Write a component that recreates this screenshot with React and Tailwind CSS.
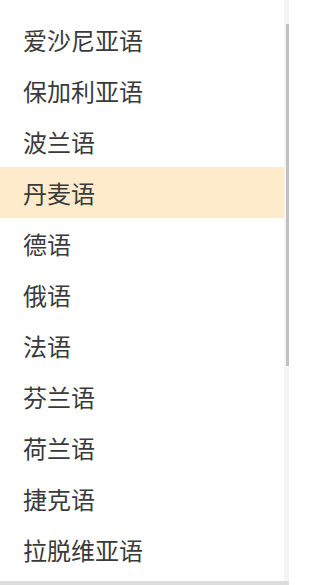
import React from "react";

const languages = [
  "爱沙尼亚语",
  "保加利亚语",
  "波兰语",
  "丹麦语",
  "德语",
  "俄语",
  "法语",
  "芬兰语",
  "荷兰语",
  "捷克语",
  "拉脱维亚语",
];

function App() {
  const active = "丹麦语";

  return (
    <div
      className="w-[289px] h-[585px] bg-[#dcdcdc] overflow-hidden"
      style={{ fontFamily: '"Noto Sans CJK SC", "Noto Sans", sans-serif' }}
    >
      <div className="flex h-[581px] bg-white">
        <div className="w-[284px] pt-[14px]">
          {languages.map((lang) => (
            <div
              key={lang}
              className={
                "h-[51px] flex items-center pl-[23px] text-[24px] text-[#3a3a3a] " +
                (lang === active ? "bg-[#fdebcb]" : "")
              }
            >
              {lang}
            </div>
          ))}
        </div>
        <div className="w-[5px] bg-[#f5f5f5] pt-[24px] flex justify-end">
          <div className="w-[3px] h-[342px] bg-[#c1c1c1]"></div>
        </div>
      </div>
    </div>
  );
}

export default App;
